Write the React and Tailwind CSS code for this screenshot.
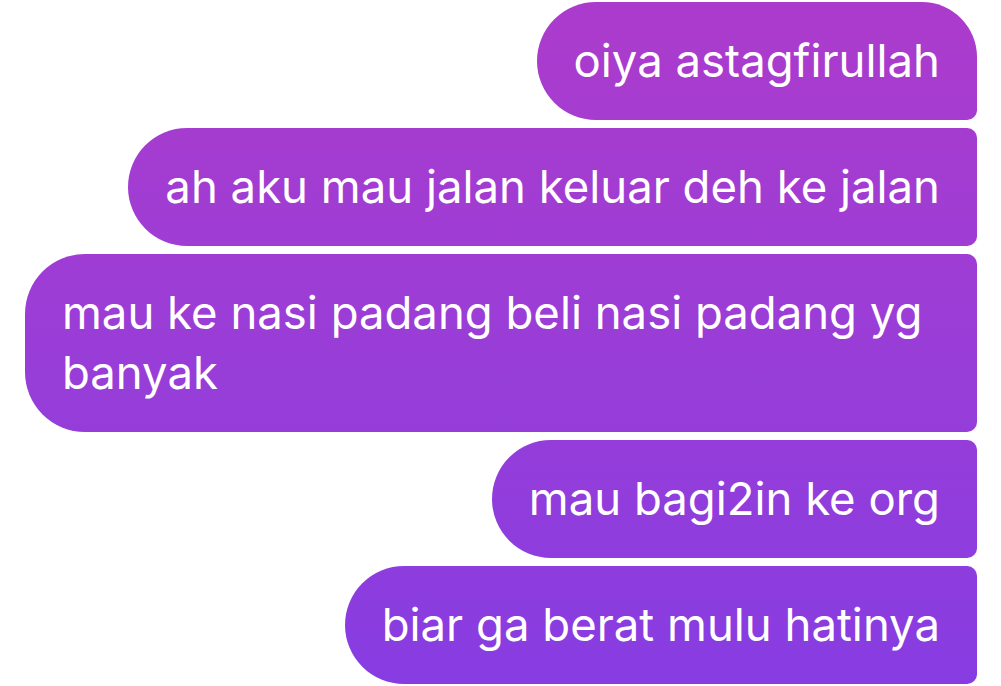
const messages = [
  { text: 'oiya astagfirullah', first: true },
  { text: 'ah aku mau jalan keluar deh ke jalan' },
  { text: 'mau ke nasi padang beli nasi padang yg banyak' },
  { text: 'mau bagi2in ke org' },
  { text: 'biar ga berat mulu hatinya' },
]

export default function App() {
  return (
    <div
      className="h-[686px] w-full overflow-hidden bg-white pt-[2px] pl-[25px] pr-[24px]"
      style={{ fontFamily: 'Inter, "Noto Sans", sans-serif' }}
    >
      <div className="flex flex-col items-end gap-[8px]">
        {messages.map((m, i) => (
          <div
            key={i}
            className={
              m.first
                ? 'max-w-[952px] rounded-l-[60px] rounded-tr-[56px] rounded-br-[10px] bg-fixed bg-linear-to-b from-[#ac3bcc] to-[#873ce2] pl-[36px] pr-[37px] py-[29px] text-[45.5px] leading-[60px] text-white'
                : 'max-w-[952px] rounded-l-[60px] rounded-r-[10px] bg-fixed bg-linear-to-b from-[#ac3bcc] to-[#873ce2] pl-[37px] pr-[37px] py-[29px] text-[45.5px] leading-[60px] text-white'
            }
          >
            {m.text}
          </div>
        ))}
      </div>
    </div>
  )
}
